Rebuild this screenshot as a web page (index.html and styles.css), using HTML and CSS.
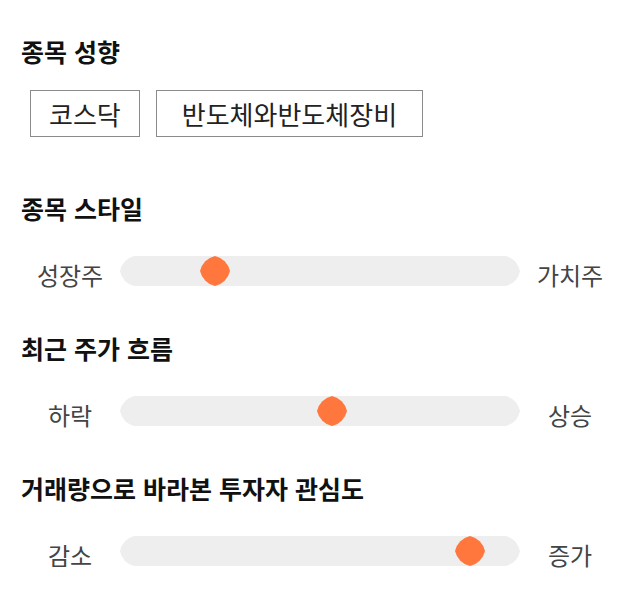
FILE: index.html
```html
<!DOCTYPE html>
<html lang="ko">
<head>
<meta charset="utf-8">
<title>종목 분석</title>
<link rel="stylesheet" href="styles.css">
</head>
<body>
<div class="page">
  <section class="section section-tags">
    <h2 class="title">종목 성향</h2>
    <div class="tags">
      <span class="tag">코스닥</span>
      <span class="tag">반도체와반도체장비</span>
    </div>
  </section>

  <section class="section">
    <h2 class="title">종목 스타일</h2>
    <div class="slider-row">
      <span class="label">성장주</span>
      <div class="track">
        <svg class="track-bg" viewBox="0 0 400 30" preserveAspectRatio="none"><path d="M14 0 H386 A20 20 0 0 1 400 15 A20 20 0 0 1 386 30 H14 A20 20 0 0 1 0 15 A20 20 0 0 1 14 0 Z" fill="#eeeeee"/></svg>
        <svg class="thumb" style="left: 23.8%" viewBox="0 0 30 30"><path d="M15 0 A20 20 0 0 1 30 15 A20 20 0 0 1 15 30 A20 20 0 0 1 0 15 A20 20 0 0 1 15 0 Z" fill="#ff773d"/></svg>
      </div>
      <span class="label">가치주</span>
    </div>
  </section>

  <section class="section">
    <h2 class="title">최근 주가 흐름</h2>
    <div class="slider-row">
      <span class="label">하락</span>
      <div class="track">
        <svg class="track-bg" viewBox="0 0 400 30" preserveAspectRatio="none"><path d="M14 0 H386 A20 20 0 0 1 400 15 A20 20 0 0 1 386 30 H14 A20 20 0 0 1 0 15 A20 20 0 0 1 14 0 Z" fill="#eeeeee"/></svg>
        <svg class="thumb" style="left: 53%" viewBox="0 0 30 30"><path d="M15 0 A20 20 0 0 1 30 15 A20 20 0 0 1 15 30 A20 20 0 0 1 0 15 A20 20 0 0 1 15 0 Z" fill="#ff773d"/></svg>
      </div>
      <span class="label">상승</span>
    </div>
  </section>

  <section class="section">
    <h2 class="title">거래량으로 바라본 투자자 관심도</h2>
    <div class="slider-row">
      <span class="label">감소</span>
      <div class="track">
        <svg class="track-bg" viewBox="0 0 400 30" preserveAspectRatio="none"><path d="M14 0 H386 A20 20 0 0 1 400 15 A20 20 0 0 1 386 30 H14 A20 20 0 0 1 0 15 A20 20 0 0 1 14 0 Z" fill="#eeeeee"/></svg>
        <svg class="thumb" style="left: 87.5%" viewBox="0 0 30 30"><path d="M15 0 A20 20 0 0 1 30 15 A20 20 0 0 1 15 30 A20 20 0 0 1 0 15 A20 20 0 0 1 15 0 Z" fill="#ff773d"/></svg>
      </div>
      <span class="label">증가</span>
    </div>
  </section>
</div>
</body>
</html>
```
FILE: styles.css
```css
* { box-sizing: border-box; }
html, body {
  margin: 0;
  padding: 0;
  background: #ffffff;
}
body {
  font-family: "Noto Sans CJK KR", "Noto Sans", sans-serif;
  color: #111111;
}
.page {
  width: 640px;
  padding: 36px 20px 0;
  display: flex;
  flex-direction: column;
}
.section {
  display: flex;
  flex-direction: column;
  margin-bottom: 47px;
}
.section-tags {
  margin-bottom: 56px;
}
.title {
  margin: 0;
  font-size: 25px;
  font-weight: 700;
  line-height: 30px;
  color: #111111;
  padding-left: 1px;
}
.tags {
  display: flex;
  gap: 16px;
  margin: 24px 0 0 10px;
}
.tag {
  display: block;
  border: 1px solid #8a8a8a;
  height: 47px;
  line-height: 45px;
  font-size: 26px;
  padding: 0 18px;
  color: #222222;
}
.tag + .tag {
  padding: 0 25px;
}
.slider-row {
  display: flex;
  align-items: center;
  margin-top: 33px;
  height: 30px;
}
.label {
  width: 100px;
  text-align: center;
  font-size: 24px;
  line-height: 30px;
  color: #444444;
  padding-top: 8px;
}
.track {
  position: relative;
  width: 400px;
  height: 30px;
}
.track-bg {
  display: block;
  width: 400px;
  height: 30px;
}
.thumb {
  position: absolute;
  top: 0;
  width: 30px;
  height: 30px;
  margin-left: -15px;
}
```
